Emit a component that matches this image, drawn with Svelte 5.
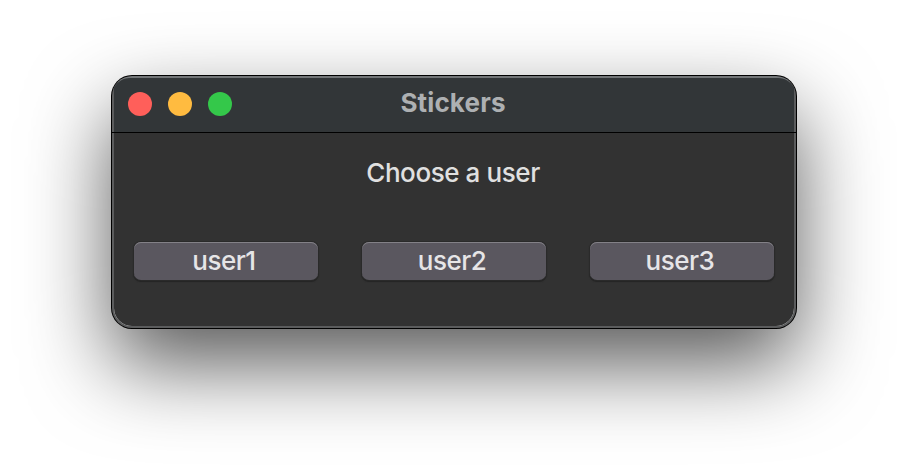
<script>
  const lights = ['close', 'minimize', 'zoom'];
  const users = ['user1', 'user2', 'user3'];
</script>

<main class="desktop">
  <section class="window">
    <header class="titlebar">
      <div class="lights">
        {#each lights as light}
          <span class="light {light}"></span>
        {/each}
      </div>
      <h1>Stickers</h1>
    </header>
    <div class="content">
      <p>Choose a user</p>
      <div class="users">
        {#each users as user}
          <button class={user}><span>{user}</span></button>
        {/each}
      </div>
    </div>
  </section>
</main>

<style>
  :global(body) {
    margin: 0;
    background: #fff;
    overflow: hidden;
  }
  .desktop {
    box-sizing: border-box;
    width: 908px;
    height: 476px;
    padding: 76px 112px 0;
    overflow: hidden;
    font-family: Inter, 'Liberation Sans', sans-serif;
    background: #fff;
  }
  .window {
    box-sizing: border-box;
    width: 684px;
    height: 252px;
    border: 2px solid #5b5c5d;
    border-top-color: #737678;
    border-radius: 20px;
    background: #323232;
    background-clip: padding-box;
    box-shadow: 0 0 0 1px #000, 0 36px 84px rgba(0, 0, 0, 0.66);
  }
  .titlebar {
    box-sizing: border-box;
    display: grid;
    grid-template-columns: 1fr auto 1fr;
    align-items: start;
    height: 55px;
    margin: 0 -2px;
    padding: 0 16px;
    border-bottom: 1px solid #000;
    background: linear-gradient(#323638, #323638) 2px 0 / calc(100% - 4px) 100% no-repeat;
    border-radius: 18px 18px 0 0 / 18px 18px 0 0;
  }
  .lights {
    display: flex;
    gap: 16px;
    padding-top: 14px;
  }
  .light {
    width: 24px;
    height: 24px;
    border-radius: 50%;
  }
  .close { background: #ff5f5a; }
  .minimize { background: #ffbb40; }
  .zoom { background: #34c84a; }
  h1 {
    margin: 9px 2px 0 0;
    font-size: 26px;
    line-height: 32px;
    font-weight: 700;
    letter-spacing: 0.15px;
    color: #adb0b2;
  }
  p {
    margin: 0;
    padding: 24px 2px 0 0;
    text-align: center;
    font-size: 26px;
    line-height: 32px;
    font-weight: 450;
    letter-spacing: -0.42px;
    color: #e0e0e0;
  }
  .users {
    display: flex;
    justify-content: space-between;
    padding: 53px 20px 0;
  }
  button {
    width: 184px;
    height: 38px;
    padding: 0 4px 0 0;
    border: 0;
    border-radius: 7px;
    background: #5a575f;
    box-shadow: inset 0 1px 0 #838187, 0 0 0 1px #2a2a2a, 0 1px 1px 1px #242424;
    font: inherit;
    font-size: 26px;
    font-weight: 450;
    line-height: 38px;
    letter-spacing: -0.5px;
    color: #e6e5e7;
  }
</style>
